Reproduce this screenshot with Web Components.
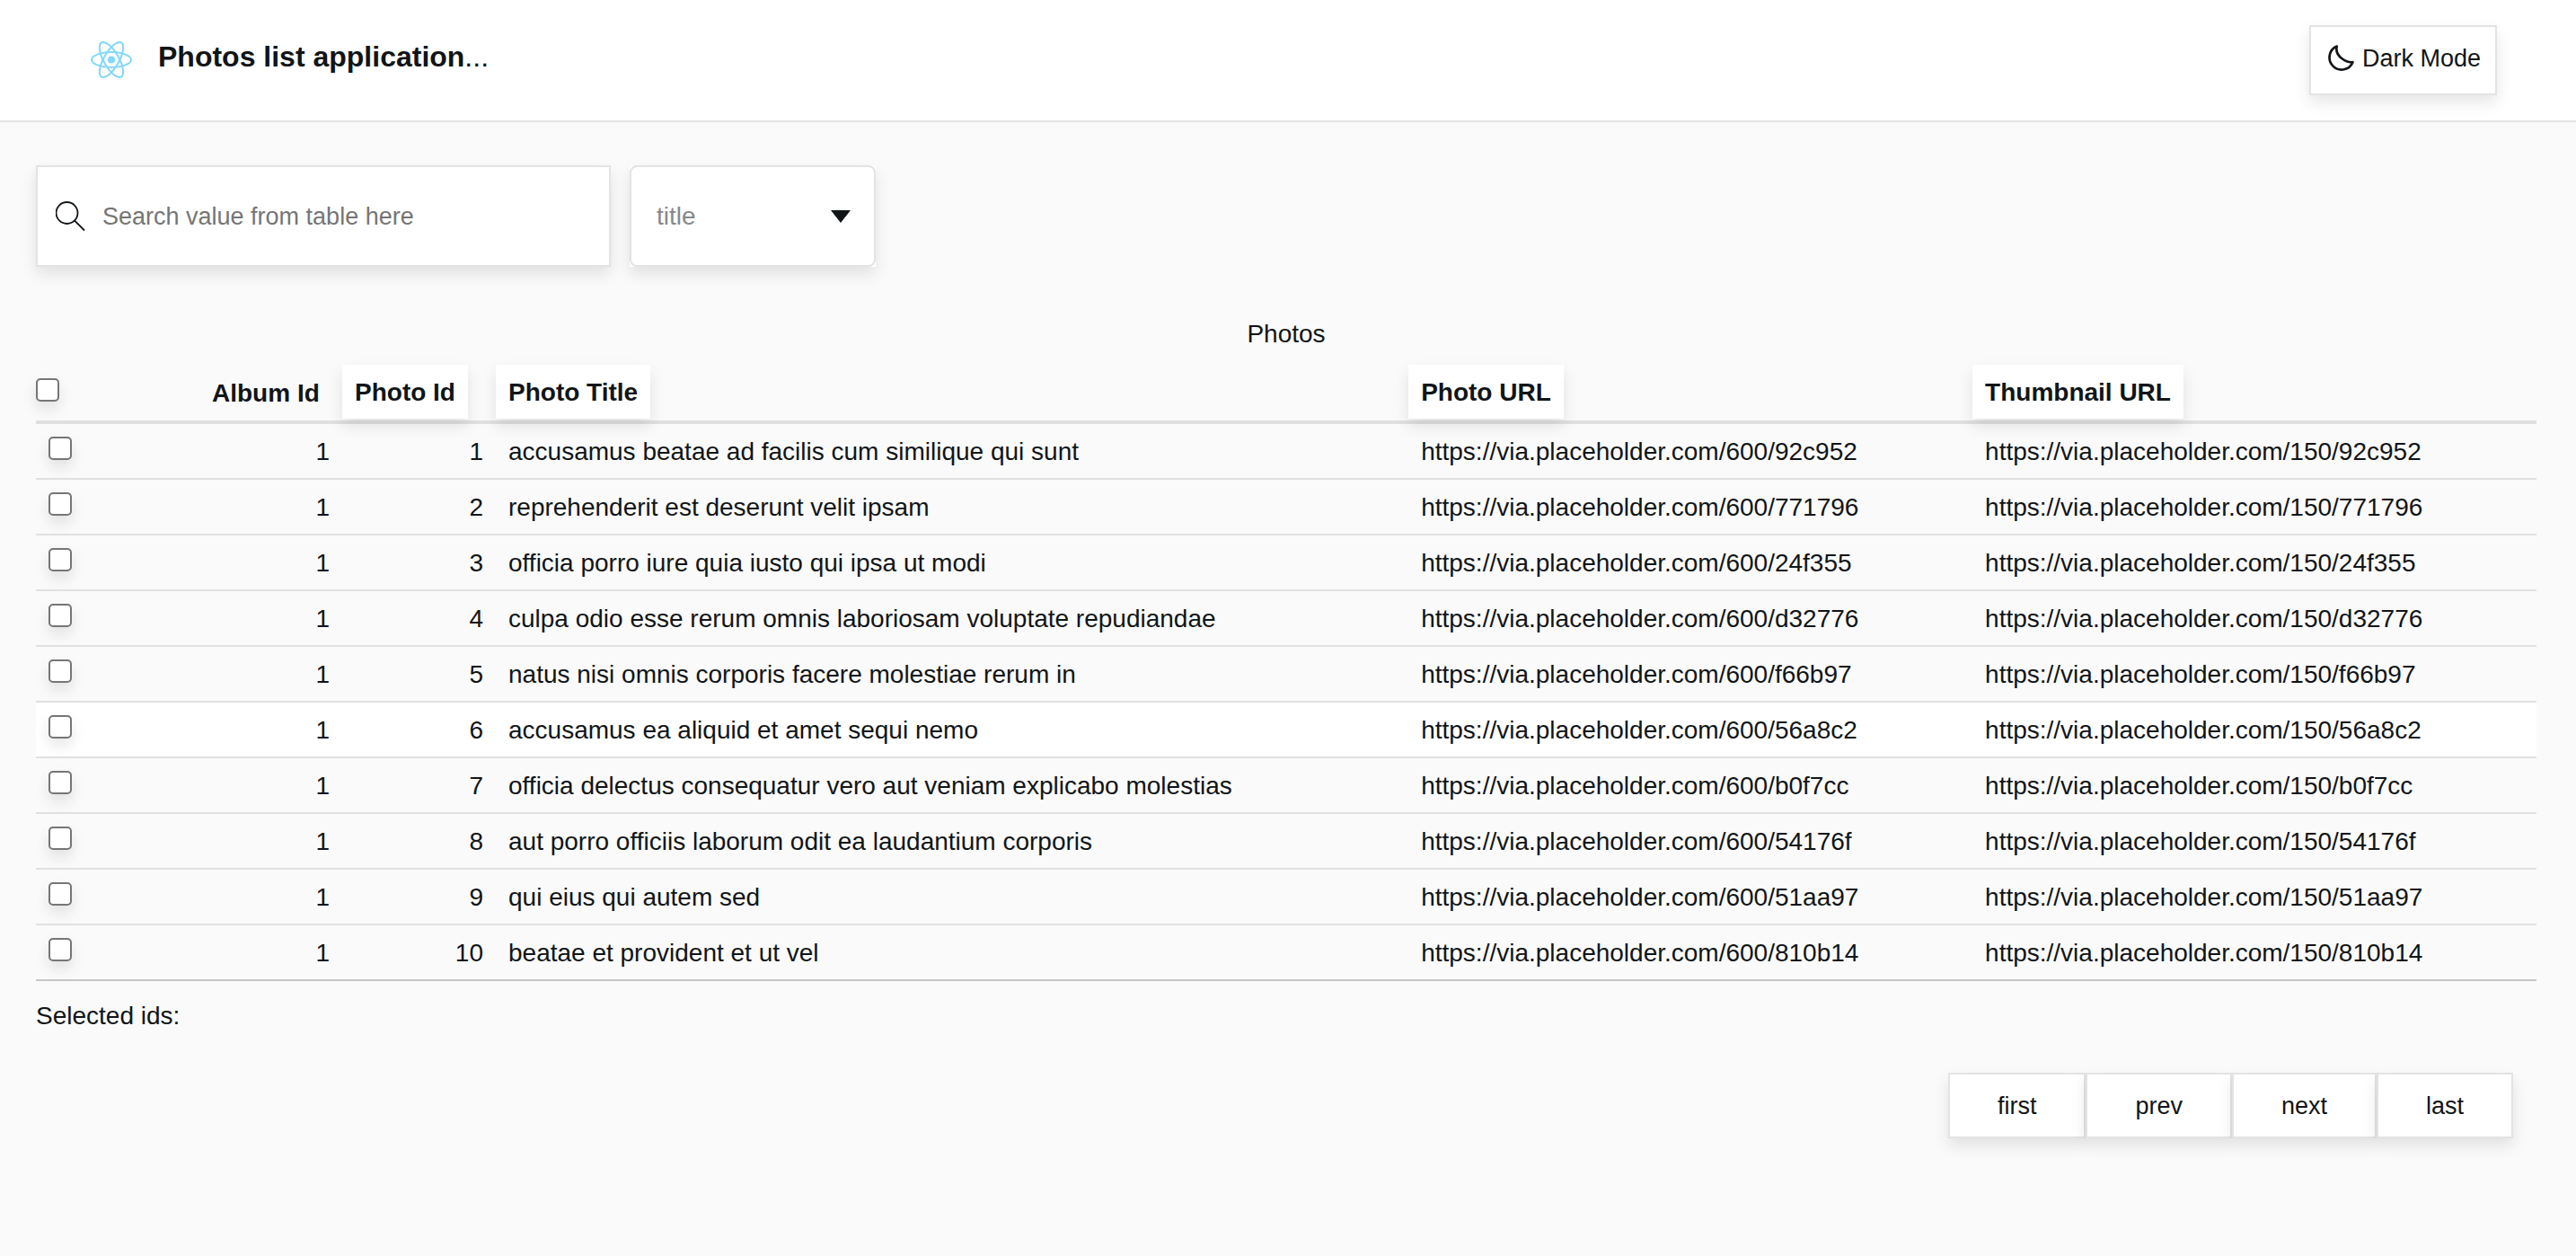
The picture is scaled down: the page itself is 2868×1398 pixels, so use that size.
<!DOCTYPE html>
<html lang="en">
<head>
<meta charset="utf-8">
<title>Photos list application</title>
<style>
html { background: #fafafa; }
body {
  margin: 0;
  font: 28px/32px "Liberation Sans", Helvetica, Arial, sans-serif;
  color: #111517;
  --surface: #fff;
  --line: #e3e3e3;
  --shadow: 0 8px 16px rgba(0, 0, 0, .1);
  --control: 27px;
}
</style>
</head>
<body>
<photos-app></photos-app>
<script>
const define = (name, html, setup) => {
  const template = document.createElement('template');
  template.innerHTML = html;
  customElements.define(name, class extends HTMLElement {
    constructor() {
      super();
      this.attachShadow({ mode: 'open' }).append(template.content.cloneNode(true));
    }
    connectedCallback() { if (setup) setup(this, this.shadowRoot); }
  });
};

define('react-logo', `
<style>:host { display: block; } svg { display: block; width: 46px; height: 41px; }</style>
<svg viewBox="-11.5 -10.23 23 20.46" aria-hidden="true">
  <circle r="2.05" fill="#83d8f7"/>
  <g stroke="#83d8f7" fill="none">
    <ellipse rx="11" ry="4.2"/>
    <ellipse rx="11" ry="4.2" transform="rotate(60)"/>
    <ellipse rx="11" ry="4.2" transform="rotate(120)"/>
  </g>
</svg>`);

define('theme-toggle', `
<style>
:host { display: block; }
button {
  display: flex; align-items: flex-start; gap: 9px;
  height: 78px; padding: 18px 16px; box-sizing: border-box;
  border: 2px solid var(--line); background: var(--surface); box-shadow: var(--shadow);
  font: inherit; font-size: var(--control); line-height: 34px; color: inherit;
}
svg { width: 32px; height: 32px; }
</style>
<button type="button">
  <svg viewBox="0 0 32 32" fill="none" stroke="currentColor" stroke-width="2.7" stroke-linejoin="round" aria-hidden="true">
    <path d="M12.7 3.6A13.5 13.5 0 1 0 30.5 21.2C24 22 10 15 12.7 3.6Z"/>
  </svg>
  <span><slot></slot></span>
</button>`);

define('app-header', `
<style>
:host { display: block; background: var(--surface); border-bottom: 2px solid var(--line); }
header {
  display: flex; align-items: flex-start; justify-content: space-between;
  padding: 28px 88px 28px 101px;
}
.brand { display: flex; align-items: flex-start; gap: 29px; padding-top: 18px; }
h1 { margin: 0; font-size: 32px; line-height: 34px; }
h1 span { font-weight: 400; }
</style>
<header>
  <div class="brand"><react-logo></react-logo><h1>Photos list application<span>...</span></h1></div>
  <theme-toggle>Dark Mode</theme-toggle>
</header>`);

define('search-field', `
<style>
:host { display: block; width: 640px; }
label {
  display: flex; align-items: center; gap: 18px;
  height: 113px; padding: 1px 20px 0; box-sizing: border-box;
  border: 2px solid var(--line); background: var(--surface); box-shadow: var(--shadow);
}
svg { flex: none; width: 34px; height: 34px; }
input {
  flex: 1; min-width: 0; padding: 0; border: 0; outline: 0; background: none;
  font: inherit; font-size: var(--control); color: inherit;
}
input::placeholder { color: #757575; opacity: 1; }
</style>
<label>
  <svg viewBox="0 0 34 34" fill="none" stroke="currentColor" stroke-width="1.8" aria-hidden="true">
    <circle cx="12.500" cy="13" r="12"/><path d="M21 21.500L32 32.500"/>
  </svg>
  <input type="text" aria-label="Search value from table here" placeholder="Search value from table here">
</label>`);

define('column-select', `
<style>
:host { display: block; width: 274px; }
.box {
  display: grid; align-items: center; height: 113px;
  background: var(--surface); box-shadow: var(--shadow);
}
select, svg { grid-area: 1 / 1; }
select {
  appearance: none; width: 100%; height: 100%; padding: 1px 28px 0; box-sizing: border-box;
  border: 2px solid var(--line); border-radius: 8px; background: none;
  font: inherit; color: #888;
}
svg { justify-self: end; width: 22px; height: 14px; margin-right: 28px; pointer-events: none; }
</style>
<div class="box">
  <select aria-label="Column to search">
    <option>title</option><option>url</option><option>thumbnailUrl</option>
  </select>
  <svg viewBox="0 0 22 14" fill="#111517" aria-hidden="true"><path d="M0 0H22L11 14Z"/></svg>
</div>`);

define('photo-table', `
<style>
:host { display: block; }
table { width: 100%; table-layout: fixed; border-collapse: separate; border-spacing: 0; }
caption { padding: 1px 0 18px; }
.c-check { width: 182px; } .c-album { width: 159px; } .c-id { width: 171px; } .c-title { width: 36.5%; }
th { height: 62px; padding: 0; text-align: left; vertical-align: top; border-bottom: 4px solid #e0e0e0; }
th.check { padding-top: 15px; height: 47px; }
th .plain { display: block; padding: 16px 14px 0; }
th button {
  display: block; height: 60px; padding: 2px 14px 0; border: 0;
  background: var(--surface); box-shadow: var(--shadow);
  font: inherit; font-weight: 700; color: inherit;
}
td { height: 58px; padding: 2px 14px 0; border-bottom: 2px solid #e0e0e0; white-space: nowrap; }
td.check { vertical-align: top; height: 46px; padding-top: 14px; }
tbody tr:last-child td { border-bottom-color: #c6c6c6; }
tbody tr.active td { background: var(--surface); }
.num { text-align: right; }
input {
  appearance: none; display: block; width: 26px; height: 26px; margin: 0; box-sizing: border-box;
  border: 2px solid #767676; border-radius: 5px; background: #fff; box-shadow: var(--shadow);
}
</style>
<table>
  <caption>Photos</caption>
  <colgroup><col class="c-check"><col class="c-album"><col class="c-id"><col class="c-title"><col><col></colgroup>
  <thead><tr>
    <th class="check"><input type="checkbox" aria-label="Select all photos"></th>
    <th><span class="plain">Album Id</span></th>
    <th><button type="button">Photo Id</button></th>
    <th><button type="button">Photo Title</button></th>
    <th><button type="button">Photo URL</button></th>
    <th><button type="button">Thumbnail URL</button></th>
  </tr></thead>
  <tbody></tbody>
</table>`, (host, root) => {
  const photos = [
    ['accusamus beatae ad facilis cum similique qui sunt', '92c952'],
    ['reprehenderit est deserunt velit ipsam', '771796'],
    ['officia porro iure quia iusto qui ipsa ut modi', '24f355'],
    ['culpa odio esse rerum omnis laboriosam voluptate repudiandae', 'd32776'],
    ['natus nisi omnis corporis facere molestiae rerum in', 'f66b97'],
    ['accusamus ea aliquid et amet sequi nemo', '56a8c2'],
    ['officia delectus consequatur vero aut veniam explicabo molestias', 'b0f7cc'],
    ['aut porro officiis laborum odit ea laudantium corporis', '54176f'],
    ['qui eius qui autem sed', '51aa97'],
    ['beatae et provident et ut vel', '810b14'],
  ];
  root.querySelector('tbody').innerHTML = photos.map(([title, color], i) => `
    <tr${i === 5 ? ' class="active"' : ''}>
      <td class="check"><input type="checkbox" aria-label="Select photo ${i + 1}"></td>
      <td class="num">1</td><td class="num">${i + 1}</td><td>${title}</td>
      <td>https://via.placeholder.com/600/${color}</td>
      <td>https://via.placeholder.com/150/${color}</td>
    </tr>`).join('');
});

define('page-button', `
<style>
:host { display: block; }
button {
  display: block; height: 73px; padding: 1px 53px 0; box-sizing: border-box;
  border: 2px solid var(--line); background: var(--surface); box-shadow: var(--shadow);
  font: inherit; font-size: var(--control); color: inherit;
}
</style>
<button type="button"><slot></slot></button>`);

define('page-nav', `
<style>:host { display: block; } nav { display: flex; justify-content: flex-end; padding-right: 26px; }</style>
<nav aria-label="Pages">
  <page-button>first</page-button><page-button>prev</page-button><page-button>next</page-button><page-button>last</page-button>
</nav>`);

define('photos-app', `
<style>
:host { display: block; }
main { padding: 48px 44px 48px 40px; }
.filters { display: flex; gap: 21px; margin-bottom: 58px; }
p { margin: 23px 0 47px; }
</style>
<app-header></app-header>
<main>
  <div class="filters"><search-field></search-field><column-select></column-select></div>
  <photo-table></photo-table>
  <p>Selected ids:</p>
  <page-nav></page-nav>
</main>`);
</script>
</body>
</html>
